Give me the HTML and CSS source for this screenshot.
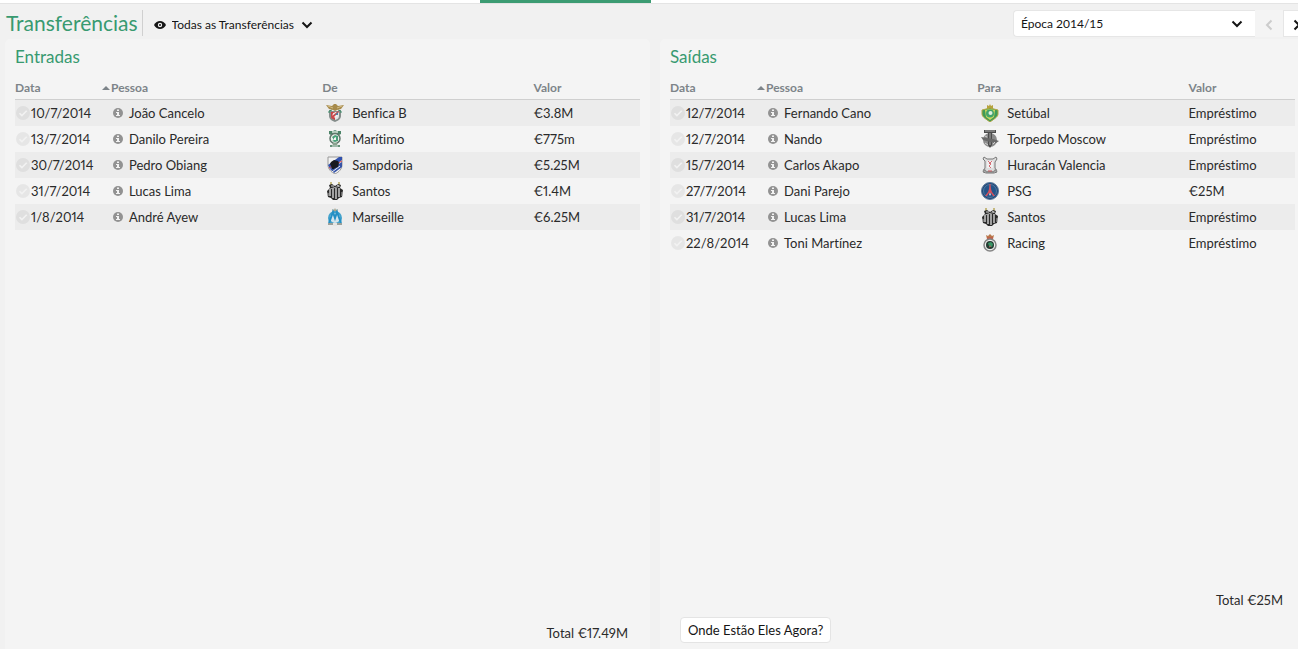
FILE: index.html
```html
<!DOCTYPE html>
<html lang="pt">

<head>
    <meta charset="UTF-8">
    <meta name="viewport" content="width=device-width, initial-scale=1.0">
    <title>Transferências</title>
    <link rel="stylesheet" href="styles.css">
</head>

<body>
    <svg class="sprite" aria-hidden="true">
        <symbol id="check" viewBox="0 0 14 14">
            <circle cx="7" cy="7" r="7" fill="#000" fill-opacity=".055" />
            <path d="M3.500 7.200l2.400 2.400 4.800-4.800" fill="none" stroke="#f2f2f2" stroke-width="1.600" />
        </symbol>
        <symbol id="info" viewBox="0 0 10 10">
            <circle cx="5" cy="5" r="5" fill="#929292" />
            <path d="M4 1.500h2v1.500H4zM3 4h3v3h1v1H3V7h1V5H3z" fill="#f2f2f2" />
        </symbol>
        <symbol id="down" viewBox="0 0 12 8">
            <path d="M1.500 1.500L6 6l4.500-4.500" fill="none" stroke="#151515" stroke-width="2" />
        </symbol>
        <symbol id="benfica" viewBox="0 0 18 18">
            <path d="M3 6l2 1h8l2-1v6c0 3-3 5-6 6-3-1-6-3-6-6z" fill="#858d8b" />
            <path d="M5 8h4v8c-3-1-4-3-4-5z" fill="#c94246" />
            <path d="M9 8h4v4c0 2-1 3-4 4z" fill="#e4e4e4" />
            <circle cx="9" cy="11" r="2.500" fill="#f2eeee" />
            <path d="M5 13l7-6 1 1-7 7z" fill="#cf4549" />
            <path d="M9 11l3-3v3z" fill="#4c80a1" />
            <path d="M3 9V7l3-1M12 6l3 1v2" fill="none" stroke="#3a8b68" />
            <path d="M0 1l6 1 2-2h2l2 2 6-1-3 4-4 1-2 1-2-1-4-1z" fill="#a78b4c" />
            <path d="M2 2l5 2M11 4l5-2" stroke="#d4bd85" />
        </symbol>
        <symbol id="maritimo" viewBox="0 0 18 18">
            <path d="M3 1h4l2-1 2 1h4v3l-2 1H5L3 4z" fill="#4c8468" />
            <path d="M6 2h6" stroke="#d9e8dd" stroke-width="1.500" />
            <circle cx="9" cy="8.500" r="5" fill="#eef3ee" stroke="#62776c" stroke-width="1.500" />
            <path d="M6 7l3-2 3 1v5l-3 1-3-1 2-1z" fill="#49a078" />
            <path d="M8 8l2-1v3H8z" fill="#f4f4f4" />
            <path d="M6 13h6l-1 2H7z" fill="#8aa28f" />
            <path d="M4 15h10v2H4z" fill="#659079" />
            <path d="M6 16h6" stroke="#dce5de" />
        </symbol>
        <symbol id="sampdoria" viewBox="0 0 18 18">
            <path d="M2 1h14v8c0 4-3 7-7 9-4-2-7-5-7-9z" fill="#f1f1f1" stroke="#999" />
            <path d="M2 9L13 1h3v3L4 13z" fill="#3151ad" />
            <path d="M4 13l12-7v5L8 17z" fill="#3654a8" />
            <path d="M3 12l13-7" stroke="#d24249" />
            <path d="M6 16l8-6" stroke="#f1f1f1" />
            <path d="M5 6l3-2 4 1 1 2-1 4-3 1-1 1H6l-1-3-1-2z" fill="#19191d" />
        </symbol>
        <symbol id="santos" viewBox="0 0 18 18">
            <path d="M5 0v3M13 0v3" stroke="#b8a85b" stroke-width="1.500" />
            <path d="M3 3l3-1 3 2 3-2 3 1-1 3 3 2-1 7-3 1-2 2H7l-2-2-3-1-1-6 3-3z" fill="#292929" />
            <path d="M4 7v7M7 6v10M10 6v11M13 6v9" stroke="#e0e0e0" stroke-width="1.300" />
            <path d="M4 7l10-3M2 11v3M16 10v4" stroke="#aaa" />
            <path d="M5 4h3M11 3l2 1" stroke="#d8d8d8" />
        </symbol>
        <symbol id="marseille" viewBox="0 0 18 18">
            <path d="M9 0l1 2 2-1-1 3H7L6 1l2 1z" fill="#a8a58c" />
            <ellipse cx="9" cy="10" rx="6" ry="6" fill="#d5e5ec" stroke="#43a2cc" stroke-width="2" />
            <path d="M3 15L7 4l2 6 2-6 4 11" fill="none" stroke="#238fc4" stroke-width="2" />
            <path d="M7 15h4v3H7z" fill="#e6e6e4" />
            <path d="M2 16h5M11 16h5" stroke="#9ca09a" stroke-width="2" />
        </symbol>
        <symbol id="setubal" viewBox="0 0 18 18">
            <path d="M6 1l2 1 1-2 1 2 2-1v4H6z" fill="#b7a23c" />
            <path d="M1 6l4-1 4-1 4 1 4 1v4c0 3-4 5-8 8-4-3-8-5-8-8z" fill="#3f9b57" stroke="#b3a742" />
            <path d="M4 6l5-1 5 1-1 7-4 3-4-3z" fill="#cdd75b" />
            <circle cx="9" cy="9.500" r="4" fill="#42a36b" />
            <circle cx="9.500" cy="9" r="2" fill="#dff0df" />
        </symbol>
        <symbol id="torpedo" viewBox="0 0 18 18">
            <circle cx="9" cy="10" r="7" fill="#8a8a8a" />
            <path d="M3 0h12v3h-4v12l-2 3-2-3V3H3z" fill="#4b4b4b" />
            <path d="M4 1h10M9 3v12" stroke="#aaa" />
            <path d="M0 7l6 1 6 1 6 2-3 2-6-1-7-2z" fill="#686868" />
            <path d="M4 13l3 2M12 14l2-2M4 6l2 1" stroke="#d0d0d0" />
        </symbol>
        <symbol id="huracan" viewBox="0 0 18 18">
            <path d="M3 1l3 2h6l3-2 1 2-2 3v6l2 4-3 1H5l-3-1 2-4V5L2 3z" fill="#ddd" stroke="#777" />
            <path d="M6 5h6v7H6z" fill="#efefef" />
            <path d="M7 5l3 3-2 2 2 2M11 5L8 8" fill="none" stroke="#d66d74" />
            <path d="M2 14l3 1M16 14l-3 1M5 16h8" stroke="#8e8e8e" stroke-width="2" />
            <path d="M7 15h4" stroke="#c9575d" />
        </symbol>
        <symbol id="psg" viewBox="0 0 18 18">
            <circle cx="9" cy="9" r="8.500" fill="#214978" stroke="#5c789c" />
            <circle cx="9" cy="9" r="6.500" fill="#245489" stroke="#7292b4" stroke-width=".6" />
            <path d="M8.500 2h1l.5 5 1 3 3 4h-2l-2-3H8l-2 3H4l3-4 1-3z" fill="#d4525e" />
            <path d="M8 12l1-1 1 1-1 2z" fill="#e9dfe3" />
        </symbol>
        <symbol id="racing" viewBox="0 0 18 18">
            <path d="M5 1l2 1 2-2 2 2 2-1-1 4H6z" fill="#b8784b" />
            <path d="M6 4h6" stroke="#cf4c49" />
            <circle cx="9" cy="11" r="6" fill="#eee" stroke="#858585" stroke-width="1.500" />
            <circle cx="9" cy="11" r="4" fill="#263b32" />
            <path d="M7 9l3-1 2 2-1 3-3-1z" fill="#399666" />
            <path d="M8 13l2-1" stroke="#c46361" />
        </symbol>
    </svg>

    <div class="tabs">
        <div class="tab-active"></div>
    </div>

    <header class="toolbar">
        <h1>Transferências</h1>
        <label class="filter">
            <svg class="eye" viewBox="0 0 12 8">
                <path d="M0 4c1.500-2.600 3.500-4 6-4s4.500 1.400 6 4c-1.500 2.600-3.500 4-6 4S1.500 6.600 0 4z" fill="#151515" />
                <circle cx="6" cy="4" r="2.200" fill="#f1f1f1" />
                <circle cx="6" cy="4" r="1" fill="#151515" />
            </svg>
            <select aria-label="Filtro">
                <option>Todas as Transferências</option>
            </select>
            <svg class="chevron"><use href="#down" /></svg>
        </label>
        <label class="season">
            <select aria-label="Época">
                <option>Época 2014/15</option>
            </select>
            <svg class="chevron"><use href="#down" /></svg>
        </label>
        <button class="step" aria-label="Época anterior" disabled>
            <svg viewBox="0 0 8 12"><path d="M6.500 1.500L2 6l4.500 4.500" /></svg>
        </button>
        <button class="step" aria-label="Época seguinte">
            <svg viewBox="0 0 8 12"><path d="M1.500 1.500L6 6l-4.500 4.500" /></svg>
        </button>
    </header>

    <main class="panels">
        <section class="panel">
            <h2>Entradas</h2>
            <table>
                <thead>
                    <tr>
                        <th class="date">Data</th>
                        <th class="person"><span class="sort"></span>Pessoa</th>
                        <th class="club">De</th>
                        <th>Valor</th>
                    </tr>
                </thead>
                <tbody>
                    <tr>
                        <td><svg class="check"><use href="#check" /></svg>10/7/2014</td>
                        <td><svg class="info"><use href="#info" /></svg>João Cancelo</td>
                        <td><svg class="crest"><use href="#benfica" /></svg>Benfica B</td>
                        <td>€3.8M</td>
                    </tr>
                    <tr>
                        <td><svg class="check"><use href="#check" /></svg>13/7/2014</td>
                        <td><svg class="info"><use href="#info" /></svg>Danilo Pereira</td>
                        <td><svg class="crest"><use href="#maritimo" /></svg>Marítimo</td>
                        <td>€775m</td>
                    </tr>
                    <tr>
                        <td><svg class="check"><use href="#check" /></svg>30/7/2014</td>
                        <td><svg class="info"><use href="#info" /></svg>Pedro Obiang</td>
                        <td><svg class="crest"><use href="#sampdoria" /></svg>Sampdoria</td>
                        <td>€5.25M</td>
                    </tr>
                    <tr>
                        <td><svg class="check"><use href="#check" /></svg>31/7/2014</td>
                        <td><svg class="info"><use href="#info" /></svg>Lucas Lima</td>
                        <td><svg class="crest"><use href="#santos" /></svg>Santos</td>
                        <td>€1.4M</td>
                    </tr>
                    <tr>
                        <td><svg class="check"><use href="#check" /></svg>1/8/2014</td>
                        <td><svg class="info"><use href="#info" /></svg>André Ayew</td>
                        <td><svg class="crest"><use href="#marseille" /></svg>Marseille</td>
                        <td>€6.25M</td>
                    </tr>
                </tbody>
            </table>
            <p class="total">Total €17.49M</p>
        </section>

        <section class="panel">
            <h2>Saídas</h2>
            <table>
                <thead>
                    <tr>
                        <th class="date">Data</th>
                        <th class="person"><span class="sort"></span>Pessoa</th>
                        <th class="club">Para</th>
                        <th>Valor</th>
                    </tr>
                </thead>
                <tbody>
                    <tr>
                        <td><svg class="check"><use href="#check" /></svg>12/7/2014</td>
                        <td><svg class="info"><use href="#info" /></svg>Fernando Cano</td>
                        <td><svg class="crest"><use href="#setubal" /></svg>Setúbal</td>
                        <td>Empréstimo</td>
                    </tr>
                    <tr>
                        <td><svg class="check"><use href="#check" /></svg>12/7/2014</td>
                        <td><svg class="info"><use href="#info" /></svg>Nando</td>
                        <td><svg class="crest"><use href="#torpedo" /></svg>Torpedo Moscow</td>
                        <td>Empréstimo</td>
                    </tr>
                    <tr>
                        <td><svg class="check"><use href="#check" /></svg>15/7/2014</td>
                        <td><svg class="info"><use href="#info" /></svg>Carlos Akapo</td>
                        <td><svg class="crest"><use href="#huracan" /></svg>Huracán Valencia</td>
                        <td>Empréstimo</td>
                    </tr>
                    <tr>
                        <td><svg class="check"><use href="#check" /></svg>27/7/2014</td>
                        <td><svg class="info"><use href="#info" /></svg>Dani Parejo</td>
                        <td><svg class="crest"><use href="#psg" /></svg>PSG</td>
                        <td>€25M</td>
                    </tr>
                    <tr>
                        <td><svg class="check"><use href="#check" /></svg>31/7/2014</td>
                        <td><svg class="info"><use href="#info" /></svg>Lucas Lima</td>
                        <td><svg class="crest"><use href="#santos" /></svg>Santos</td>
                        <td>Empréstimo</td>
                    </tr>
                    <tr>
                        <td><svg class="check"><use href="#check" /></svg>22/8/2014</td>
                        <td><svg class="info"><use href="#info" /></svg>Toni Martínez</td>
                        <td><svg class="crest"><use href="#racing" /></svg>Racing</td>
                        <td>Empréstimo</td>
                    </tr>
                </tbody>
            </table>
            <p class="total">Total €25M</p>
            <button class="where">Onde Estão Eles Agora?</button>
        </section>
    </main>
</body>

</html>
```

FILE: styles.css
```css
* {
    margin: 0;
    padding: 0;
    box-sizing: border-box;
}

body {
    display: flex;
    flex-direction: column;
    min-height: 100vh;
    overflow: hidden;
    background-color: #f1f1f1;
    color: #2a2a2a;
    font-family: Lato, "Liberation Sans", sans-serif;
    font-size: 13px;
    font-variant-ligatures: none;
    font-variant-numeric: proportional-nums;
}

h1,
h2 {
    color: #389a70;
    font-weight: 400;
}

select,
button {
    font-family: inherit;
    font-size: 12px;
    color: #151515;
    border: none;
    background: none;
    appearance: none;
}

.sprite {
    position: absolute;
    width: 0;
    height: 0;
}

.tabs {
    height: 4px;
    background-color: #fff;
    border-bottom: 1px solid #e4e4e4;
}

.tab-active {
    width: 171px;
    height: 3px;
    margin-left: 37%;
    background-color: #3c9c73;
}

/* the bar and the panels run a little past the right edge */
.toolbar {
    display: flex;
    align-items: flex-start;
    height: 35px;
    margin-right: -13px;
    padding-top: 6px;
    padding-left: 6px;
}

.toolbar h1 {
    padding-right: 4px;
    border-right: 1px solid #d0d0d0;
    font-size: 21px;
    line-height: 26px;
}

.filter {
    display: flex;
    align-items: center;
    gap: 6px;
    height: 29px;
    margin-left: 11px;
}

.eye {
    width: 12px;
    height: 8px;
}

.chevron {
    width: 12px;
    height: 8px;
    pointer-events: none;
}

.season {
    position: relative;
    width: 242px;
    margin-left: auto;
}

.season select {
    width: 100%;
    height: 27px;
    padding: 0 7px;
    border: 1px solid #e6e6e6;
    border-right: none;
    border-radius: 4px 0 0 4px;
    background-color: #fff;
}

.season .chevron {
    position: absolute;
    top: 10px;
    right: 12px;
}

.step {
    width: 28px;
    height: 27px;
    border: 1px solid #e6e6e6;
    background-color: #fff;
}

.step svg {
    width: 8px;
    height: 12px;
    vertical-align: middle;
}

.step path {
    fill: none;
    stroke: #151515;
    stroke-width: 2;
}

.step:disabled {
    border-color: #f4f4f4;
    background-color: #f4f4f4;
}

.step:disabled path {
    stroke: #ccc;
}

.panels {
    display: flex;
    flex: 1;
    gap: 10px;
    margin-left: 5px;
    margin-right: -7px;
}

.panel {
    display: flex;
    flex: 1;
    flex-direction: column;
    padding: 6px 10px;
    border-radius: 5px 5px 0 0;
    background-color: #f4f4f4;
}

.panel h2 {
    margin-bottom: 6px;
    font-size: 17px;
    line-height: 24px;
}

table {
    width: 100%;
    table-layout: fixed;
    border-collapse: separate;
    border-spacing: 0;
    text-align: left;
}

th {
    height: 25px;
    border-bottom: 1px solid #cfcfcf;
    color: #7d8489;
    font-size: 12px;
}

td {
    height: 26px;
    white-space: nowrap;
}

tbody tr:nth-child(odd) {
    background-color: #ececec;
}

.date {
    width: 96px;
}

.person,
.club {
    width: 33.8%;
}

.sort {
    float: left;
    margin: 6px 1px 0 -9px;
    border: 4px solid transparent;
    border-top: none;
    border-bottom-color: #7d8489;
}

.check {
    width: 14px;
    height: 14px;
    margin: 0 1px;
    vertical-align: -2px;
}

.info {
    width: 10px;
    height: 10px;
    margin: 0 6px 0 2px;
    vertical-align: baseline;
}

.crest {
    width: 18px;
    height: 18px;
    margin: 0 8px 0 4px;
    vertical-align: -4px;
}

.total {
    margin-top: auto;
    padding: 0 12px;
    line-height: 20px;
    text-align: right;
}

.where {
    align-self: flex-start;
    height: 26px;
    margin: 7px 10px 0;
    padding: 0 7px;
    border: 1px solid #e4e4e4;
    border-radius: 4px;
    background-color: #fff;
    font-size: 13px;
}
```
